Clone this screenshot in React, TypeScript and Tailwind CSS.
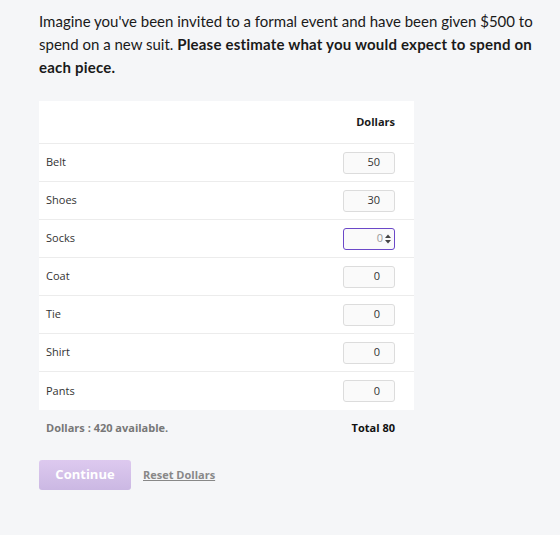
import React from "react";

const rows: { label: string; value: string; focused?: boolean }[] = [
  { label: "Belt", value: "50" },
  { label: "Shoes", value: "30" },
  { label: "Socks", value: "0", focused: true },
  { label: "Coat", value: "0" },
  { label: "Tie", value: "0" },
  { label: "Shirt", value: "0" },
  { label: "Pants", value: "0" },
];

const small = "font-['Open_Sans','Liberation_Sans',sans-serif] text-[11px]";

export default function App() {
  return (
    <div className="min-h-[535px] w-[560px] bg-[#f5f6f8] font-['Lato','Liberation_Sans',sans-serif] text-[#1a1a1a]">
      <div className="pl-[39px] pr-[20px] pt-[10px]">
        <p className="text-[15px] leading-[23px]">
          Imagine you've been invited to a formal event and have been given $500 to spend on a new suit.{" "}
          <span className="font-bold tracking-[0.2px]">Please estimate what you would expect to spend on each piece.</span>
        </p>

        <div className="mt-[22px] w-[375px] bg-white">
          <div className="flex h-[43px] items-center justify-end border-b border-[#ececec] pr-[19px]">
            <span className={`${small} font-bold`}>Dollars</span>
          </div>
          {rows.map((r, i) => (
            <div
              key={r.label}
              className={`flex h-[38px] items-center justify-between pl-[7px] pr-[19px] ${i < rows.length - 1 ? "border-b border-[#ececec]" : ""}`}
            >
              <span className={`${small} text-[#333]`}>{r.label}</span>
              {r.focused ? (
                <div className="flex h-[22px] w-[52px] items-center justify-end rounded-[3px] border-[1.5px] border-[#6b48c8] bg-[#fafafa] pr-[2px]">
                  <span className={`${small} text-[#999]`}>{r.value}</span>
                  <svg width="8" height="12" viewBox="0 0 8 12" className="ml-[1px]">
                    <path d="M4 1.5 L7 5 H1 Z" fill="#444" />
                    <path d="M4 10.5 L7 7 H1 Z" fill="#444" />
                  </svg>
                </div>
              ) : (
                <div className="flex h-[22px] w-[52px] items-center justify-end rounded-[3px] border border-[#dcdcdc] bg-[#fafafa] pr-[14px]">
                  <span className={`${small} text-[#333]`}>{r.value}</span>
                </div>
              )}
            </div>
          ))}
        </div>

        <div className="flex h-[36px] w-[375px] items-center justify-between pl-[7px] pr-[19px]">
          <span className={`${small} font-bold text-[#777]`}>Dollars : 420 available.</span>
          <span className={`${small} font-bold text-[#111]`}>Total 80</span>
        </div>

        <div className="mt-[14px] flex items-center gap-[12px]">
          <button className="h-[30px] w-[92px] rounded-[3px] bg-gradient-to-b from-[#ddc9ef] to-[#cbb8e3] font-['Open_Sans','Liberation_Sans',sans-serif] text-[13px] font-bold text-white">
            Continue
          </button>
          <span className={`${small} font-bold text-[#888] underline`}>Reset Dollars</span>
        </div>
      </div>
    </div>
  );
}
